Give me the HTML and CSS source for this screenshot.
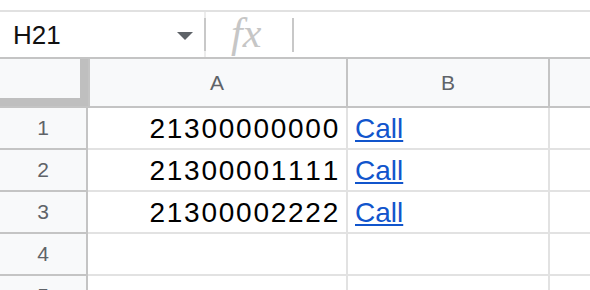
FILE: index.html
```html
<!DOCTYPE html>
<html>
<head>
<meta charset="utf-8">
<link rel="stylesheet" href="styles.css">
</head>
<body>
<div class="page">
  <div class="top-gap"></div>
  <div class="formula-bar">
    <div class="namebox">
      <span class="name">H21</span>
      <span class="caret"></span>
    </div>
    <div class="sep"></div>
    <div class="fx">fx</div>
    <div class="sep sep-short"></div>
  </div>
  <div class="grid">
    <div class="corner"><div class="corner-fill"></div></div>
    <div class="colhead">A</div>
    <div class="colhead">B</div>
    <div class="colhead colhead-last"></div>

    <div class="rowhead">1</div>
    <div class="cell num">21300000000</div>
    <div class="cell"><a class="link" href="#">Call</a></div>
    <div class="cell cell-last"></div>

    <div class="rowhead">2</div>
    <div class="cell num">21300001111</div>
    <div class="cell"><a class="link" href="#">Call</a></div>
    <div class="cell cell-last"></div>

    <div class="rowhead">3</div>
    <div class="cell num">21300002222</div>
    <div class="cell"><a class="link" href="#">Call</a></div>
    <div class="cell cell-last"></div>

    <div class="rowhead">4</div>
    <div class="cell"></div>
    <div class="cell"></div>
    <div class="cell cell-last"></div>

    <div class="rowhead">5</div>
    <div class="cell"></div>
    <div class="cell"></div>
    <div class="cell cell-last"></div>
  </div>
</div>
</body>
</html>
```

FILE: styles.css
```css
html, body {
  margin: 0;
  padding: 0;
  background: #ffffff;
}
.page {
  width: 590px;
  height: 290px;
  overflow: hidden;
  font-family: "Liberation Sans", Arial, sans-serif;
  font-kerning: none;
}
.top-gap {
  height: 10px;
}
.formula-bar {
  height: 45px;
  border-top: 2px solid #e1e1e1;
  display: flex;
  align-items: center;
}
.namebox {
  width: 204px;
  height: 100%;
  box-sizing: border-box;
  display: flex;
  align-items: center;
  padding-left: 13px;
  padding-right: 11px;
}
.name {
  flex: 1;
  font-size: 26px;
  color: #111111;
  line-height: 1;
}
.caret {
  width: 0;
  height: 0;
  border-left: 8px solid transparent;
  border-right: 8px solid transparent;
  border-top: 8px solid #5f6368;
  margin-top: 2px;
}
.sep {
  width: 2px;
  height: 45px;
  background: linear-gradient(#ececec 0 6px, #c8c8c8 6px 39px, #ececec 39px);
}
.sep-short {
  height: 34px;
  background: #c8c8c8;
}
.fx {
  width: 86px;
  box-sizing: border-box;
  padding-left: 25px;
  font-family: "Liberation Serif", "Times New Roman", serif;
  font-style: italic;
  font-size: 42px;
  line-height: 1;
  color: #c6c6c6;
  margin-top: -4px;
}
.grid {
  display: grid;
  grid-template-columns: 88px 260px 202px 40px;
  grid-template-rows: 49px repeat(5, 42px);
  border-top: 2px solid #c4c4c4;
}
.corner {
  background: #bfbfbf;
  border-bottom: 2px solid #c4c4c4;
  border-right: 2px solid #c4c4c4;
  box-sizing: border-box;
  margin-right: -2px;
  position: relative;
  z-index: 1;
}
.corner-fill {
  width: 80px;
  height: 39px;
  background: #f8f9fa;
}
.colhead {
  background: #f8f9fa;
  border-bottom: 2px solid #c4c4c4;
  border-right: 2px solid #c4c4c4;
  box-sizing: border-box;
  display: flex;
  align-items: center;
  justify-content: center;
  font-size: 21px;
  color: #5f6368;
}
.colhead-last {
  border-right: none;
}
.rowhead {
  background: #f8f9fa;
  border-bottom: 2px solid #c4c4c4;
  border-right: 2px solid #c4c4c4;
  box-sizing: border-box;
  display: flex;
  align-items: center;
  justify-content: center;
  font-size: 21px;
  color: #5f6368;
}
.cell {
  border-bottom: 2px solid #e2e2e2;
  border-right: 2px solid #e2e2e2;
  box-sizing: border-box;
  font-size: 28px;
  line-height: 41px;
  color: #000000;
  padding-left: 7px;
  white-space: nowrap;
  overflow: hidden;
}
.cell-last {
  border-right: none;
}
.num {
  text-align: right;
  padding-right: 6px;
  padding-left: 0;
  letter-spacing: 1.75px;
  font-variant-numeric: tabular-nums;
}
.link {
  color: #1155cc;
  text-decoration: underline;
}
```
